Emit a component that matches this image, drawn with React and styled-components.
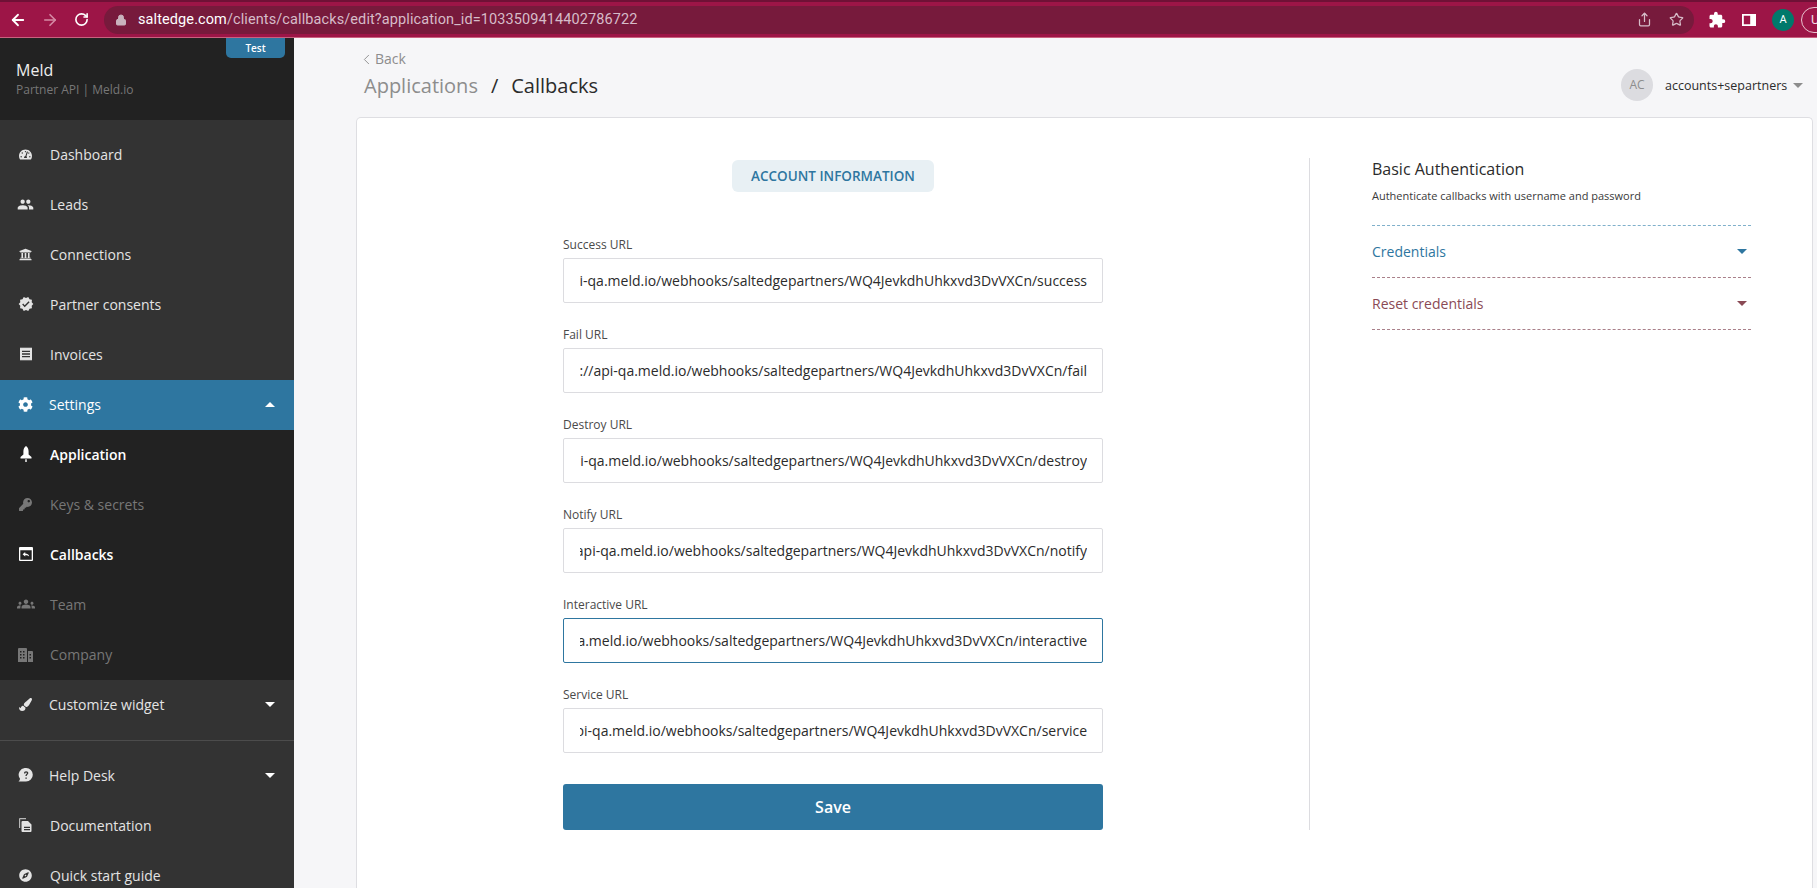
import styled, { createGlobalStyle } from "styled-components";
import { ArrowLeft, ArrowRight, RotateCw, Lock, Share, Star, ChevronLeft } from "lucide-react";
import { FaTachometerAlt, FaUniversity, FaCog, FaKey, FaPaintBrush, FaCompass } from "react-icons/fa";
import { MdPeople, MdVerified, MdReceipt, MdGroups, MdExtension } from "react-icons/md";

const BASE = "https://api-qa.meld.io/webhooks/saltedgepartners/WQ4JevkdhUhkxvd3DvVXCn/";

const fields = [
  { label: "Success URL", slug: "success" },
  { label: "Fail URL", slug: "fail" },
  { label: "Destroy URL", slug: "destroy" },
  { label: "Notify URL", slug: "notify" },
  { label: "Interactive URL", slug: "interactive", focused: true },
  { label: "Service URL", slug: "service" },
];

const RocketIcon = () => (
  <svg width="14" height="16" viewBox="0 0 14 16">
    <path fill="currentColor" d="M7 0c1.700 1.300 2.600 3.200 2.600 5.400v3.100L12.500 11v1.500H1.500V11l2.900-2.500V5.400C4.400 3.200 5.300 1.300 7 0z" />
    <path fill="currentColor" d="M6.300 13.300h1.400V16H6.300z" />
  </svg>
);

const CompanyIcon = () => (
  <svg width="15" height="15" viewBox="0 0 15 15">
    <path fill="currentColor" fillRule="evenodd" d="M1 1h7a1 1 0 0 1 1 1v13H0V2a1 1 0 0 1 1-1zm1 3v1.500h1.500V4zm3 0v1.500h1.500V4zM2 7v1.500h1.500V7zm3 0v1.500h1.500V7zm-3 3v1.500h1.500V10zm3 0v1.500h1.500V10z" />
    <path fill="currentColor" fillRule="evenodd" d="M10 4h4a1 1 0 0 1 1 1v10h-5zm1.500 3v1.500H13V7zm0 3v1.500H13V10z" />
  </svg>
);

const CallbackIcon = () => (
  <svg width="14" height="14" viewBox="0 0 14 14">
    <path fill="currentColor" fillRule="evenodd" d="M1 0h12a1 1 0 0 1 1 1v12a1 1 0 0 1-1 1H1a1 1 0 0 1-1-1V1a1 1 0 0 1 1-1zm.3 3.200v9.500h11.400V3.200z" />
    <path fill="currentColor" d="M3.600 7.200 6.200 5v1.500c2 0 3.600.8 4 3-.8-1-2-1.300-4-1.300v1.300z" />
  </svg>
);

const HelpIcon = () => (
  <svg width="15" height="14" viewBox="0 0 15 14">
    <path fill="currentColor" fillRule="evenodd" d="M8 0a6.700 6.700 0 0 1 6.800 6.800A6.800 6.800 0 0 1 8 13.600H.4c1-.8 1.500-1.600 1.600-2.800A6.800 6.800 0 0 1 8 0zM6 5.400h1.300c0-.6.3-.9.8-.9s.8.3.8.7c0 .9-1.500 1-1.500 2.900h1.300c0-1.300 1.600-1.500 1.600-3 0-1.200-.9-1.900-2.200-1.900C6.800 3.200 6 4 6 5.400zm1.400 4v1.400h1.400V9.400z" />
  </svg>
);

const DocsIcon = () => (
  <svg width="13" height="14" viewBox="0 0 13 14">
    <path fill="currentColor" opacity="0.75" d="M0 1a1 1 0 0 1 1-1h6v1.200H1.200V10H0z" />
    <path fill="currentColor" fillRule="evenodd" d="M3.500 3H9l3.500 3.500V13a1 1 0 0 1-1 1h-8a1 1 0 0 1-1-1V4a1 1 0 0 1 1-1zm1.500 5.800v1.200h6V8.800zm0 2.200v1.200h6V11z" />
  </svg>
);

const SidePanelIcon = () => (
  <svg width="14" height="12" viewBox="0 0 14 12">
    <path fill="#fff" fillRule="evenodd" d="M0 0h14v12H0zm1.800 1.800v8.400h6.400V1.800z" />
  </svg>
);

const topNav = [
  { label: "Dashboard", icon: <FaTachometerAlt /> },
  { label: "Leads", icon: <MdPeople size={17} /> },
  { label: "Connections", icon: <FaUniversity /> },
  { label: "Partner consents", icon: <MdVerified size={16} /> },
  { label: "Invoices", icon: <MdReceipt size={16} /> },
];

const subNav = [
  { label: "Application", icon: <RocketIcon />, tone: "on" },
  { label: "Keys & secrets", icon: <FaKey />, tone: "off" },
  { label: "Callbacks", icon: <CallbackIcon />, tone: "on" },
  { label: "Team", icon: <MdGroups size={18} />, tone: "off" },
  { label: "Company", icon: <CompanyIcon />, tone: "off" },
];

export default function App() {
  return (
    <Page>
      <GlobalStyle />
      <BrowserBar>
        <NavButton><ArrowLeft size={18} strokeWidth={2.4} /></NavButton>
        <NavButton $muted><ArrowRight size={18} strokeWidth={2.2} /></NavButton>
        <NavButton><RotateCw size={15} strokeWidth={2.6} /></NavButton>
        <Omnibox>
          <LockWrap><Lock size={12} fill="#c9b3bd" strokeWidth={2} /></LockWrap>
          <UrlText>
            <b>saltedge.com</b>/clients/callbacks/edit?application_id=1033509414402786722
          </UrlText>
          <OmniActions>
            <Share size={15} />
            <Star size={15} />
          </OmniActions>
        </Omnibox>
        <BarIcons>
          <MdExtension size={18} color="#fff" />
          <SidePanelIcon />
          <ProfileDot>A</ProfileDot>
          <ProfilePill>U</ProfilePill>
        </BarIcons>
      </BrowserBar>

      <Body>
        <Sidebar>
          <Brand>
            <TestBadge>Test</TestBadge>
            <BrandName>Meld</BrandName>
            <BrandSub>Partner API | Meld.io</BrandSub>
          </Brand>

          <NavGroup $pad>
            {topNav.map((item) => (
              <NavItem key={item.label}>
                <NavIcon>{item.icon}</NavIcon>
                {item.label}
              </NavItem>
            ))}
          </NavGroup>

          <ActiveItem>
            <NavIcon><FaCog size={15} /></NavIcon>
            <GroupLabel>Settings</GroupLabel>
            <Caret $up $color="#fff" />
          </ActiveItem>

          <SubGroup>
            {subNav.map((item) => (
              <NavItem key={item.label} $tone={item.tone}>
                <NavIcon>{item.icon}</NavIcon>
                {item.label}
              </NavItem>
            ))}
          </SubGroup>

          <NavGroup>
            <NavItem>
              <NavIcon><FaPaintBrush /></NavIcon>
              <GroupLabel>Customize widget</GroupLabel>
              <Caret $color="#fff" />
            </NavItem>
            <SideRule />
            <NavItem>
              <NavIcon><HelpIcon /></NavIcon>
              <GroupLabel>Help Desk</GroupLabel>
              <Caret $color="#fff" />
            </NavItem>
            <NavItem>
              <NavIcon><DocsIcon /></NavIcon>
              Documentation
            </NavItem>
            <NavItem>
              <NavIcon><FaCompass /></NavIcon>
              Quick start guide
            </NavItem>
          </NavGroup>
        </Sidebar>

        <Main>
          <TopRow>
            <div>
              <BackLink><ChevronLeft size={17} strokeWidth={1.3} />Back</BackLink>
              <Crumbs>
                <CrumbParent>Applications</CrumbParent>
                <CrumbSlash>/</CrumbSlash>
                <span>Callbacks</span>
              </Crumbs>
            </div>
            <UserBox>
              <UserAvatar>AC</UserAvatar>
              <UserName>accounts+separtners</UserName>
              <Caret $color="#8d8d8d" />
            </UserBox>
          </TopRow>

          <Card>
            <FormColumn>
              <Pill>ACCOUNT INFORMATION</Pill>
              {fields.map((f) => (
                <Field key={f.slug}>
                  <FieldLabel>{f.label}</FieldLabel>
                  <InputBox $focused={f.focused}>
                    <InputClip>
                      <span>{BASE + f.slug}</span>
                    </InputClip>
                  </InputBox>
                </Field>
              ))}
              <SaveButton>Save</SaveButton>
            </FormColumn>

            <SideColumn>
              <SideTitle>Basic Authentication</SideTitle>
              <SideText>Authenticate callbacks with username and password</SideText>
              <Accordion $color="#2e76a0" $first>
                Credentials
                <Caret $color="#2e76a0" $big />
              </Accordion>
              <Accordion $color="#8a4a55">
                Reset credentials
                <Caret $color="#8a4a55" $big />
              </Accordion>
            </SideColumn>
          </Card>
        </Main>
      </Body>
    </Page>
  );
}

const GlobalStyle = createGlobalStyle`
  html, body {
    margin: 0;
    height: 100%;
    overflow: hidden;
    font-family: "Open Sans", sans-serif;
  }
`;

const Page = styled.div`
  width: 1817px;
  height: 888px;
  display: flex;
  flex-direction: column;
  overflow: hidden;
  background: #f6f6f8;
`;

const BrowserBar = styled.div`
  height: 38px;
  box-sizing: border-box;
  display: flex;
  align-items: center;
  padding-left: 1px;
  background: #9d1547;
  border-top: 2px solid #6f1136;
  border-bottom: 1px solid #c9617f;
`;

const NavButton = styled.span`
  width: 33px;
  flex-shrink: 0;
  display: flex;
  justify-content: center;
  color: ${(p) => (p.$muted ? "#d68aa5" : "#fff")};
  margin-right: -1px;
`;

const Omnibox = styled.div`
  margin-left: 7px;
  width: 1590px;
  flex-shrink: 0;
  height: 28px;
  display: flex;
  align-items: center;
  border-radius: 14px;
  background: #771a3c;
  font-family: Roboto, sans-serif;
`;

const LockWrap = styled.span`
  width: 23px;
  display: flex;
  justify-content: flex-end;
  color: #c9b3bd;
`;

const UrlText = styled.span`
  margin-left: 11px;
  flex: 1;
  font-size: 14.5px;
  letter-spacing: 0.1px;
  color: #d6bcc8;
  b {
    font-weight: 400;
    color: #fff;
  }
`;

const OmniActions = styled.span`
  display: flex;
  gap: 17px;
  padding-right: 10px;
  color: #d6bcc8;
`;

const BarIcons = styled.div`
  margin-left: 14px;
  display: flex;
  align-items: center;
  gap: 16px;
`;

const ProfileDot = styled.span`
  width: 22px;
  height: 22px;
  flex-shrink: 0;
  margin-left: 0;
  border-radius: 50%;
  background: #00796b;
  color: #fff;
  font: 400 11px Roboto, sans-serif;
  display: flex;
  align-items: center;
  justify-content: center;
`;

const ProfilePill = styled.span`
  width: 44px;
  height: 26px;
  flex-shrink: 0;
  margin-left: -9px;
  box-sizing: border-box;
  border: 1px solid #e9c3cf;
  border-radius: 13px;
  padding-left: 9px;
  color: #f3dbe3;
  font: 400 13px/24px Roboto, sans-serif;
`;

const Body = styled.div`
  flex: 1;
  display: flex;
  min-height: 0;
`;

const Sidebar = styled.aside`
  width: 294px;
  flex-shrink: 0;
  display: flex;
  flex-direction: column;
  overflow: hidden;
  background: #333;
`;

const Brand = styled.div`
  position: relative;
  height: 82px;
  flex-shrink: 0;
  box-sizing: border-box;
  padding: 22px 16px 0;
  background: #222;
`;

const TestBadge = styled.span`
  position: absolute;
  top: 0;
  right: 9px;
  width: 59px;
  height: 20px;
  background: #2e76a0;
  border-radius: 0 0 5px 5px;
  color: #fff;
  font-size: 10px;
  font-weight: 600;
  line-height: 20px;
  text-align: center;
`;

const BrandName = styled.div`
  font-size: 16px;
  line-height: 20px;
  color: #eee;
`;

const BrandSub = styled.div`
  margin-top: 1px;
  font-size: 12px;
  line-height: 18px;
  color: #777;
`;

const NavGroup = styled.div`
  padding-top: ${(p) => (p.$pad ? "10px" : "0")};
  flex-shrink: 0;
  background: #333;
`;

const SubGroup = styled.div`
  flex-shrink: 0;
  background: #222;
`;

const NavItem = styled.div`
  height: 50px;
  box-sizing: border-box;
  display: flex;
  align-items: center;
  padding: 0 19px 2px 0;
  font-size: 14px;
  color: ${(p) => (p.$tone === "off" ? "#777" : p.$tone === "on" ? "#fff" : "#e4e4e4")};
  font-weight: ${(p) => (p.$tone === "on" ? 600 : 400)};
`;

const ActiveItem = styled(NavItem)`
  flex-shrink: 0;
  background: #2e76a0;
  color: #fff;
`;

const NavIcon = styled.span`
  width: 50px;
  flex-shrink: 0;
  padding-left: 1px;
  box-sizing: border-box;
  display: flex;
  justify-content: center;
  font-size: 13px;
`;

const GroupLabel = styled.span`
  flex: 1;
  margin-left: -1px;
`;

const SideRule = styled.div`
  margin-top: 10px;
  margin-bottom: 10px;
  height: 1px;
  background: #4c4c4c;
`;

const Caret = styled.i`
  width: 0;
  height: 0;
  margin-left: auto;
  border-left: ${(p) => (p.$big ? "5.5px" : "5px")} solid transparent;
  border-right: ${(p) => (p.$big ? "5.5px" : "5px")} solid transparent;
  ${(p) => (p.$up ? "border-bottom" : "border-top")}: 5px solid ${(p) => p.$color};
`;

const Main = styled.main`
  flex: 1;
  min-width: 0;
  display: flex;
  flex-direction: column;
  padding: 0 4px 0 62px;
`;

const TopRow = styled.div`
  height: 79px;
  flex-shrink: 0;
  display: flex;
  justify-content: space-between;
  align-items: flex-start;
  padding-top: 12px;
  box-sizing: border-box;
`;

const BackLink = styled.div`
  display: flex;
  align-items: center;
  margin-left: 2px;
  font-size: 14px;
  line-height: 18px;
  color: #8d8d8d;
`;

const Crumbs = styled.div`
  margin: 4px 0 0 8px;
  font-size: 20px;
  line-height: 28px;
  color: #2b2b2b;
`;

const CrumbParent = styled.span`
  color: #8d8d8d;
`;

const CrumbSlash = styled.span`
  margin: 0 13px;
`;

const UserBox = styled.div`
  display: flex;
  align-items: center;
  width: 182px;
  margin-top: 19px;
  margin-right: 10px;
`;

const UserAvatar = styled.span`
  width: 32px;
  height: 32px;
  border-radius: 50%;
  background: #dcdce0;
  color: #8d8d8d;
  font-size: 12px;
  line-height: 32px;
  text-align: center;
`;

const UserName = styled.span`
  margin-left: 12px;
  font-size: 12.5px;
  font-weight: 500;
  color: #2b2b2b;
`;

const Card = styled.section`
  flex: 1;
  display: flex;
  align-items: flex-start;
  box-sizing: border-box;
  padding: 40px 0 0 206px;
  background: #fff;
  border: 1px solid #dedee2;
  border-bottom: 0;
  border-radius: 5px 5px 0 0;
`;

const FormColumn = styled.div`
  width: 540px;
  flex-shrink: 0;
  display: flex;
  flex-direction: column;
  align-items: stretch;
`;

const Pill = styled.div`
  align-self: center;
  margin: 2px 0 44px;
  width: 202px;
  height: 32px;
  border-radius: 6px;
  background: #e8f0f4;
  color: #2e76a0;
  font-size: 13.5px;
  font-weight: 600;
  line-height: 32px;
  text-align: center;
`;

const Field = styled.div`
  height: 90px;
  flex-shrink: 0;
`;

const FieldLabel = styled.div`
  font-size: 12px;
  line-height: 18px;
  color: #4a4a4a;
  margin-bottom: 4px;
`;

const InputBox = styled.div`
  height: 45px;
  box-sizing: border-box;
  display: flex;
  align-items: center;
  padding: 0 15px 0 16px;
  background: #fff;
  border: 1px solid ${(p) => (p.$focused ? "#2e76a0" : "#dcdce0")};
  border-radius: 2px;
`;

const InputClip = styled.div`
  flex: 1;
  min-width: 0;
  display: flex;
  justify-content: flex-end;
  overflow: hidden;
  white-space: nowrap;
  font-size: 14px;
  line-height: 20px;
  color: #2b2b2b;
  span {
    flex-shrink: 0;
  }
`;

const SaveButton = styled.button`
  margin-top: 8px;
  height: 46px;
  border: 0;
  border-radius: 3px;
  background: #2e76a0;
  color: #fff;
  font-family: inherit;
  font-size: 16px;
  font-weight: 600;
`;

const SideColumn = styled.div`
  margin-left: 206px;
  width: 379px;
  height: 672px;
  flex-shrink: 0;
  padding-left: 62px;
  border-left: 1px solid #dcdce0;
`;

const SideTitle = styled.div`
  font-size: 16px;
  line-height: 22px;
  color: #2b2b2b;
`;

const SideText = styled.div`
  margin-top: 7px;
  padding-bottom: 20px;
  font-size: 11px;
  line-height: 18px;
  color: #3a3a3a;
`;

const Accordion = styled.div`
  height: ${(p) => (p.$first ? "53px" : "52px")};
  display: flex;
  align-items: center;
  padding-right: 4px;
  box-sizing: border-box;
  font-size: 14px;
  color: ${(p) => p.$color};
  border-bottom: 1px dashed #a9808a;
  ${(p) => p.$first && "border-top: 1px dashed #7fb0cb;"}
`;
